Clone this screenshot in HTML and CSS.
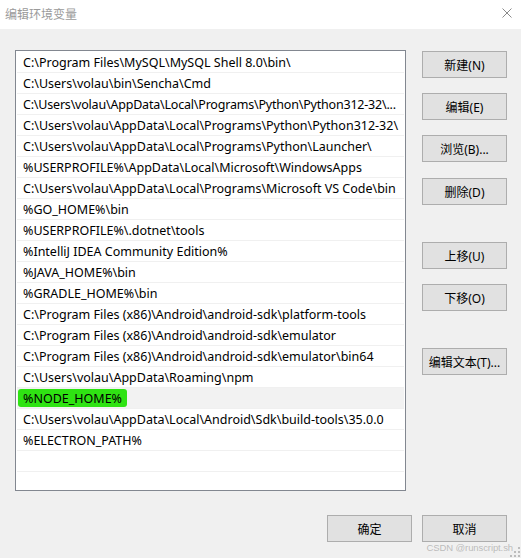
FILE: index.html
```html
<!DOCTYPE html>
<html>
<head>
<meta charset="utf-8">
<link rel="stylesheet" href="styles.css">
</head>
<body>
<div class="window">
  <div class="titlebar">
    <span class="title">编辑环境变量</span>
    <svg class="close" width="10" height="10" viewBox="0 0 10 10"><path d="M0.5 0.5 L9.5 9.5 M9.5 0.5 L0.5 9.5" stroke="#8a8a8a" stroke-width="1" fill="none"/></svg>
  </div>
  <div class="content">
    <div class="main">
      <div class="listbox">
        <div class="row">C:\Program Files\MySQL\MySQL Shell 8.0\bin\</div>
        <div class="row">C:\Users\volau\bin\Sencha\Cmd</div>
        <div class="row tight">C:\Users\volau\AppData\Local\Programs\Python\Python312-32\...</div>
        <div class="row">C:\Users\volau\AppData\Local\Programs\Python\Python312-32\</div>
        <div class="row">C:\Users\volau\AppData\Local\Programs\Python\Launcher\</div>
        <div class="row">%USERPROFILE%\AppData\Local\Microsoft\WindowsApps</div>
        <div class="row">C:\Users\volau\AppData\Local\Programs\Microsoft VS Code\bin</div>
        <div class="row">%GO_HOME%\bin</div>
        <div class="row">%USERPROFILE%\.dotnet\tools</div>
        <div class="row">%IntelliJ IDEA Community Edition%</div>
        <div class="row">%JAVA_HOME%\bin</div>
        <div class="row">%GRADLE_HOME%\bin</div>
        <div class="row">C:\Program Files (x86)\Android\android-sdk\platform-tools</div>
        <div class="row">C:\Program Files (x86)\Android\android-sdk\emulator</div>
        <div class="row">C:\Program Files (x86)\Android\android-sdk\emulator\bin64</div>
        <div class="row">C:\Users\volau\AppData\Roaming\npm</div>
        <div class="row selected"><span class="mark">%NODE_HOME%</span></div>
        <div class="row">C:\Users\volau\AppData\Local\Android\Sdk\build-tools\35.0.0</div>
        <div class="row">%ELECTRON_PATH%</div>
        <div class="row"></div>
        <div class="row"></div>
      </div>
      <div class="side">
        <button class="btn b-new">新建(N)</button>
        <button class="btn b-gap15">编辑(E)</button>
        <button class="btn b-gap15">浏览(B)...</button>
        <button class="btn b-gap16">删除(D)</button>
        <button class="btn b-gap37">上移(U)</button>
        <button class="btn b-gap15">下移(O)</button>
        <button class="btn b-gap37">编辑文本(T)...</button>
      </div>
    </div>
    <div class="footer">
      <button class="btn">确定</button>
      <button class="btn">取消</button>
    </div>
    <div class="watermark">CSDN @runscript.sh</div>
    <svg class="grip" width="10" height="10" viewBox="0 0 10 10">
      <rect x="8" y="0" width="2" height="2" fill="#bcbcbc"/>
      <rect x="4" y="4" width="2" height="2" fill="#bcbcbc"/>
      <rect x="8" y="4" width="2" height="2" fill="#bcbcbc"/>
      <rect x="0" y="8" width="2" height="2" fill="#bcbcbc"/>
      <rect x="4" y="8" width="2" height="2" fill="#bcbcbc"/>
      <rect x="8" y="8" width="2" height="2" fill="#bcbcbc"/>
    </svg>
  </div>
</div>
</body>
</html>
```
FILE: styles.css
```css
* { box-sizing: border-box; }
html, body {
  margin: 0;
  padding: 0;
  background: #f0f0f0;
}
body {
  font-family: "Noto Sans", "Noto Sans CJK SC", sans-serif;
  font-size: 12px;
  color: #000;
}
.window {
  width: 521px;
  height: 558px;
  display: flex;
  flex-direction: column;
  position: relative;
}
.titlebar {
  height: 29px;
  background: #fff;
  display: flex;
  align-items: flex-start;
  justify-content: space-between;
  padding: 5px 9px 0 5px;
}
.title {
  font-family: "Noto Sans CJK SC", sans-serif;
  font-size: 12px;
  line-height: 17px;
  color: #9a9a9a;
}
.close { margin-top: 3px; }
.content {
  flex: 1;
  padding: 21px 14px 0 15px;
  position: relative;
}
.main {
  display: flex;
  gap: 16px;
}
.listbox {
  width: 392px;
  height: 441px;
  background: #fff;
  border: 1px solid #828790;
  padding: 1px 1px 0 1px;
  overflow: hidden;
}
.row {
  height: 21px;
  border-bottom: 1px solid #f0f0f0;
  padding: 1px 0 0 6px;
  line-height: 19px;
  white-space: nowrap;
  overflow: hidden;
  font-family: "Noto Sans", "Noto Sans CJK SC", sans-serif;
  font-size: 12.5px;
}
.row.tight { letter-spacing: -0.2px; }
.row.selected { background: #f2f2f2; }
.mark {
  background: #2fe313;
  border-radius: 3px;
  padding: 1px 5px 0 5px;
  margin-left: -5px;
}
.side {
  display: flex;
  flex-direction: column;
  padding-top: 1px;
}
.btn {
  width: 85px;
  height: 27px;
  background: #e1e1e1;
  border: 1px solid #adadad;
  font-family: "Noto Sans", "Noto Sans CJK SC", sans-serif;
  font-size: 12px;
  color: #000;
  padding: 0;
  margin: 0;
}
.b-gap15 { margin-top: 15px; }
.b-gap16 { margin-top: 16px; }
.b-gap37 { margin-top: 37px; }
.footer {
  display: flex;
  justify-content: flex-end;
  gap: 10px;
  margin-top: 24px;
}
.watermark {
  position: absolute;
  right: 8px;
  bottom: 5px;
  font-family: "Liberation Sans", sans-serif;
  font-size: 9.5px;
  letter-spacing: -0.1px;
  color: rgba(150,150,150,0.6);
}
.grip {
  position: absolute;
  right: 1px;
  bottom: 1px;
}
```
